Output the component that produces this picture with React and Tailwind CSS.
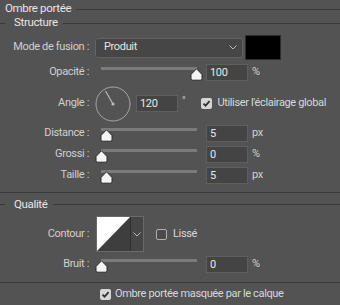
import React from 'react';

const font = { fontFamily: 'Roboto, "Liberation Sans", sans-serif', letterSpacing: '-0.35px' };

const Thumb = () => (
  <svg width="13" height="13" viewBox="0 0 13 13">
    <path d="M6.5 0.8 L12 6.5 V10.5 Q12 12.2 10.3 12.2 H2.7 Q1 12.2 1 10.5 V6.5 Z" fill="#f4f4f4" stroke="#2a2a2a" strokeWidth="1" />
  </svg>
);

const Slider = ({ value }) => (
  <div className="relative w-[107px] h-[17px]">
    <div className="absolute left-[6px] right-[5px] top-[3px] h-[3px] bg-[#7b7b7b]"></div>
    <div className="absolute top-[4px]" style={{ left: `${value * 0.95}px` }}>
      <Thumb />
    </div>
  </div>
);

const Field = ({ value, unit }) => (
  <div className="flex items-center">
    <div className="ml-[4px] w-[42px] h-[17px] bg-[#444444] border border-[#5f5f5f] text-[#e8e8e8] text-[11px] leading-[15px] pl-[3px]">{value}</div>
    <span className="ml-[4px] text-[#d2d2d2] text-[11px]">{unit}</span>
  </div>
);

const Label = ({ children }) => (
  <div className="w-[89px] shrink-0 text-right text-[11px] text-[#d0d0d0] whitespace-nowrap">{children}</div>
);

const SliderRow = ({ label, value, num, unit, mt = 'mt-[4px]' }) => (
  <div className={`flex items-center h-[17px] ${mt}`}>
    <Label>{label}</Label>
    <div className="ml-[6px] flex items-start h-[17px]">
      <Slider value={value} />
    </div>
    <Field value={num} unit={unit} />
  </div>
);

const Check = ({ checked }) => (
  checked ? (
    <div className="w-[11px] h-[11px] rounded-[2px] bg-[#d6d6d6] flex items-center justify-center shrink-0">
      <svg width="9" height="9" viewBox="0 0 9 9">
        <path d="M1.5 4.6 L3.6 6.7 L7.6 2.2" fill="none" stroke="#333" strokeWidth="1.8" />
      </svg>
    </div>
  ) : (
    <div className="w-[11px] h-[11px] rounded-[2px] border border-[#b0b0b0] bg-[#4a4a4a] shrink-0"></div>
  )
);

const Chevron = () => (
  <svg width="8" height="5" viewBox="0 0 8 5">
    <path d="M0.5 0.5 L4 4 L7.5 0.5" fill="none" stroke="#b8b8b8" strokeWidth="1" />
  </svg>
);

export default function App() {
  return (
    <div className="w-[340px] h-[305px] bg-[#535353] overflow-hidden select-none" style={font}>
      <div className="flex items-center h-[18px]">
        <span className="pl-[5px] text-[11.5px] text-[#e6e6e6]">Ombre portée</span>
        <div className="flex-1 ml-[5px] h-px bg-[#3a3a3a]"></div>
      </div>

      <div className="flex items-center h-[10px]">
        <div className="w-[5px] h-px bg-[#3a3a3a]"></div>
        <span className="pl-[9px] text-[11.5px] text-[#e6e6e6]">Structure</span>
        <div className="flex-1 ml-[5px] h-px bg-[#3a3a3a]"></div>
      </div>

      <div className="flex items-center h-[25px] mt-[7px]">
        <Label>Mode de fusion :</Label>
        <div className="ml-[6px] w-[148px] h-[20px] rounded-[3px] bg-[#464646] border border-[#636363] flex items-center justify-between pl-[8px] pr-[5px]">
          <span className="text-[11px] text-[#e4e4e4]">Produit</span>
          <Chevron />
        </div>
        <div className="ml-[2px] w-[36px] h-[25px] bg-black border border-[#2d2d2d]"></div>
      </div>

      <SliderRow label="Opacité :" value={100} num="100" unit="%" mt="mt-[4px]" />

      <div className="flex items-center h-[35px] mt-[5px]">
        <Label>Angle :</Label>
        <div className="ml-[6px]">
          <svg width="36" height="36" viewBox="0 0 36 36">
            <circle cx="18" cy="18" r="17" fill="none" stroke="#a6a6a6" strokeWidth="1" />
            <line x1="18" y1="18" x2="10.5" y2="5" stroke="#b8b8b8" strokeWidth="1.2" />
            <circle cx="18" cy="18" r="1.6" fill="#bdbdbd" />
          </svg>
        </div>
        <div className="ml-[5px] w-[42px] h-[17px] bg-[#444444] border border-[#5f5f5f] text-[#e8e8e8] text-[11px] leading-[15px] pl-[3px]">120</div>
        <span className="ml-[4px] -mt-[6px] text-[10px] text-[#d2d2d2]">°</span>
        <div className="ml-[16px] flex items-center whitespace-nowrap">
          <Check checked />
          <span className="ml-[5px] text-[11px] text-[#d8d8d8]">Utiliser l'éclairage global</span>
        </div>
      </div>

      <SliderRow label="Distance :" value={5} num="5" unit="px" />
      <SliderRow label="Grossi :" value={0} num="0" unit="%" />
      <SliderRow label="Taille :" value={5} num="5" unit="px" />

      <div className="mt-[8px] h-px bg-[#3a3a3a]"></div>

      <div className="flex items-center h-[13px] mt-[5px]">
        <div className="w-[5px] h-px bg-[#3a3a3a]"></div>
        <span className="pl-[9px] text-[11.5px] text-[#e6e6e6]">Qualité</span>
        <div className="flex-1 ml-[5px] h-px bg-[#3a3a3a]"></div>
      </div>

      <div className="flex items-center h-[36px] mt-[5px]">
        <Label>Contour :</Label>
        <div className="ml-[7px] flex h-[36px] border border-[#6a6a6a]">
          <svg width="33" height="34" viewBox="0 0 33 34" className="block">
            <rect width="33" height="34" fill="#3e3e3e" />
            <polygon points="0,0 33,0 0,34" fill="#ffffff" />
          </svg>
          <div className="w-[13px] h-[34px] bg-[#464646] border-l border-[#2f2f2f] flex items-center justify-center">
            <Chevron />
          </div>
        </div>
        <div className="ml-[12px] flex items-center">
          <Check />
          <span className="ml-[6px] text-[11px] text-[#d8d8d8]">Lissé</span>
        </div>
      </div>

      <SliderRow label="Bruit :" value={0} num="0" unit="%" />

      <div className="mt-[9px] h-px bg-[#3a3a3a]"></div>

      <div className="flex items-center h-[12px] mt-[5px] pl-[100px] whitespace-nowrap">
        <Check checked />
        <span className="ml-[4px] text-[11px] text-[#d8d8d8]">Ombre portée masquée par le calque</span>
      </div>
    </div>
  );
}
